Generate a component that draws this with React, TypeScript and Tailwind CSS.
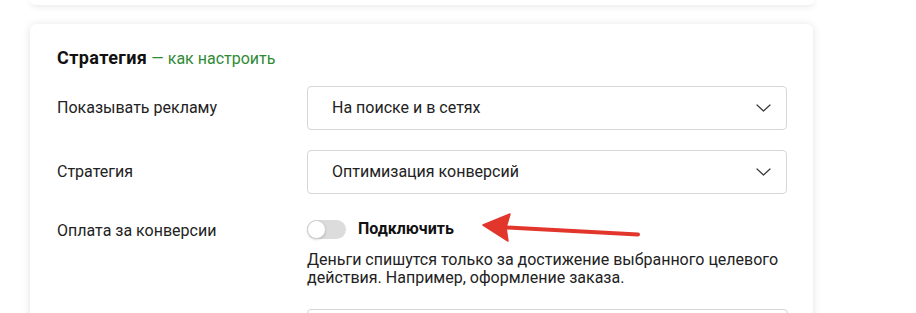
import React from 'react';

function Chevron() {
  return (
    <svg width="15" height="8" viewBox="0 0 15 8" fill="none" className="shrink-0">
      <path d="M1 1 L7.5 7 L14 1" stroke="#3a3a3a" strokeWidth="1.2" strokeLinecap="round" strokeLinejoin="round" />
    </svg>
  );
}

function Select({ value }: { value?: string }) {
  return (
    <div className="flex h-[44px] w-[481px] items-center justify-between rounded-[4px] border border-[#d6d6d6] bg-white pl-[24px] pr-[15px]">
      <span className="text-[16px] text-[#222]">{value}</span>
      {value && <Chevron />}
    </div>
  );
}

function Row({ label, children }: { label: string; children: React.ReactNode }) {
  return (
    <div className="flex items-center">
      <div className="w-[250px] shrink-0 text-[16px] text-[#222]">{label}</div>
      {children}
    </div>
  );
}

export default function App() {
  return (
    <div className="relative h-[313px] w-[916px] overflow-hidden bg-white pl-[30px]" style={{ fontFamily: 'Roboto, "Noto Sans", sans-serif' }}>
      <div className="h-[5px] w-[784px] rounded-b-[6px] bg-white shadow-[0_1px_6px_rgba(0,0,0,0.12)]" />
      <div className="mt-[19px] w-[783px] rounded-[6px] bg-white pb-[40px] pl-[27px] pr-[26px] pt-[22px] shadow-[0_1px_8px_rgba(0,0,0,0.12)]">
        <div className="leading-[24px]">
          <span className="text-[18px] font-bold tracking-[0.4px] text-[#111]">Стратегия</span>
          <span className="text-[16px] text-[#2f8a34]"> — как настроить</span>
        </div>
        <div className="mt-[15px] flex flex-col gap-[20px]">
          <Row label="Показывать рекламу">
            <Select value="На поиске и в сетях" />
          </Row>
          <Row label="Стратегия">
            <Select value="Оптимизация конверсий" />
          </Row>
        </div>
        <div className="mt-[23px] flex">
          <div className="w-[250px] shrink-0 pt-[2px] text-[16px] leading-[24px] text-[#222]">Оплата за конверсии</div>
          <div className="flex flex-col">
            <div className="flex h-[24px] items-center gap-[12px]">
              <div className="relative h-[19px] w-[39px] rounded-full bg-[#dcdcdc]">
                <div className="absolute left-0 top-0 h-[19px] w-[19px] rounded-full border border-[#cfcfcf] bg-white shadow-[0_1px_2px_rgba(0,0,0,0.15)]" />
              </div>
              <span className="text-[16px] font-bold text-[#111]">Подключить</span>
            </div>
            <div className="mt-[10px] w-[481px] text-[16px] leading-[18px] text-[#222]">
              Деньги спишутся только за достижение выбранного целевого действия. Например, оформление заказа.
            </div>
            <div className="mt-[22px]">
              <Select />
            </div>
          </div>
        </div>
      </div>
      <svg className="absolute left-[476px] top-[208px]" width="170" height="40" viewBox="0 0 170 40" fill="none">
        <path d="M30 19.5 L162 26.5" stroke="#e2362c" strokeWidth="4" strokeLinecap="round" />
        <path d="M7 17 L34 6 L30 19.5 L32 33 Z" fill="#e2362c" stroke="#e2362c" strokeWidth="1.5" strokeLinejoin="round" />
      </svg>
    </div>
  );
}
